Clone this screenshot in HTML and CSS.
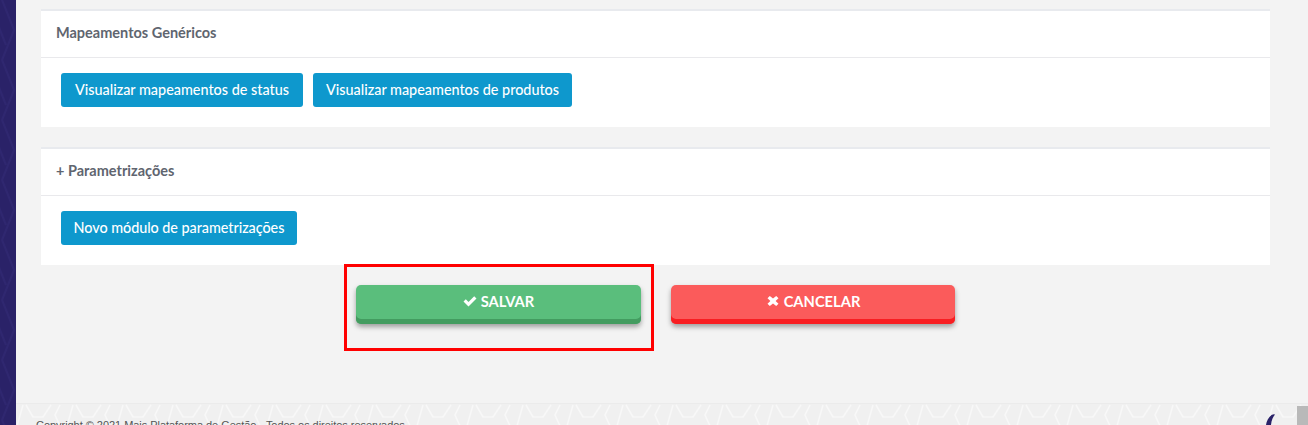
FILE: index.html
```html
<!DOCTYPE html>
<html lang="pt-BR">
<head>
<meta charset="utf-8">
<title>Parametrizações</title>
<link rel="stylesheet" href="styles.css">
</head>
<body>
<div class="shell">
  <aside class="sidebar"></aside>
  <div class="main">
    <div class="content">
      <section class="card">
        <header class="card-head">Mapeamentos Genéricos</header>
        <div class="card-body">
          <button class="btn btn-status">Visualizar mapeamentos de status</button>
          <button class="btn btn-products">Visualizar mapeamentos de produtos</button>
        </div>
      </section>
      <section class="card">
        <header class="card-head">+ Parametrizações</header>
        <div class="card-body">
          <button class="btn btn-new">Novo módulo de parametrizações</button>
        </div>
      </section>
      <div class="actions">
        <button class="action save">
          <svg class="ico" viewBox="0 0 14 14"><path d="M0.5 7.5 L2.8 5.2 L5.5 7.9 L11.2 2.2 L13.5 4.5 L5.5 12.5 Z" fill="#fff"/></svg>
          SALVAR
        </button>
        <button class="action cancel">
          <svg class="ico" viewBox="0 0 14 14"><path d="M1.5 4.2 L3.8 1.9 L7 4.6 L10.2 1.9 L12.5 4.2 L9.6 7 L12.5 9.8 L10.2 12.1 L7 9.4 L3.8 12.1 L1.5 9.8 L4.4 7 Z" fill="#fff"/></svg>
          CANCELAR
        </button>
      </div>
    </div>
    <footer class="footer">
      <span class="copy">Copyright © 2021 Mais Plataforma de Gestão - Todos os direitos reservados.</span>
      <svg class="logo" viewBox="0 0 11 11"><path d="M1 11 C1.5 7 3.5 3 7 0.7 Q9 -0.3 10 0.5 C8 3 6.5 6 6 11 Z" fill="#2a2268"/></svg>
    </footer>
  </div>
</div>
<div class="scroll-thumb"></div>
<div class="highlight"></div>
</body>
</html>
```
FILE: styles.css
```css
* { box-sizing: border-box; }
html, body { margin: 0; height: 425px; overflow: hidden; }
body { font-family: "Lato", "Noto Sans", sans-serif; background: #f3f3f3; }
.shell { display: flex; height: 425px; }
.sidebar {
  width: 16px; flex: none; background-color: #2a2268;
  background-image: url("data:image/svg+xml,%3Csvg xmlns='http://www.w3.org/2000/svg' width='50' height='60'%3E%3Cpath d='M2 0 L14 30 L2 60 M-4 20 L6 45' fill='none' stroke='%232f2770' stroke-width='2'/%3E%3C/svg%3E");
}
.main { flex: 1; display: flex; flex-direction: column; min-width: 0; }
.content { height: 387px; padding: 9px 38px 0 25px; flex: none; margin-bottom: 16px; }
.card { background: #fff; border-top: 2px solid #e8eaee; height: 118px; margin-bottom: 20px; }
.card-head {
  height: 47px; padding: 0 15px 3px; display: flex; align-items: center;
  font-size: 14.5px; font-weight: 700; color: #60656f; border-bottom: 1px solid #e9e9ec;
}
.card-body { padding: 15px 20px; display: flex; gap: 10px; }
.btn {
  height: 34px; padding: 0 0 2px; border: 0; border-radius: 3px; background: #0e98cd; color: #fff;
  font: 500 14.4px "Lato", "Noto Sans", sans-serif; white-space: nowrap;
}
.btn-status { width: 242px; }
.btn-products { width: 259px; }
.btn-new { width: 236px; letter-spacing: -0.05px; }
.actions { display: flex; gap: 30px; padding-left: 315px; }
.action {
  width: 285px; height: 39px; padding: 0 0 7px; border: 0; border-radius: 5px; color: #fff;
  font: 700 14.7px "Lato", "Noto Sans", sans-serif;
  display: flex; align-items: center; justify-content: center; gap: 4px;
}
.action + .action { width: 284px; }
.save { background: #5abe7c; box-shadow: inset 0 -5px 0 #439c60, 0 3px 5px rgba(0,0,0,.35); }
.cancel { background: #fb5b5b; box-shadow: inset 0 -5px 0 #f81e22, 0 3px 5px rgba(0,0,0,.35); }
.ico { width: 14px; height: 14px; }
.footer {
  height: 22px; flex: none; position: relative; overflow: hidden; border-top: 1px solid #ebebeb; background-color: #f0f0f0;
  background-image: url("data:image/svg+xml,%3Csvg xmlns='http://www.w3.org/2000/svg' width='50' height='22'%3E%3Cpath d='M1 22 L7 1 M10 1 L17 13 L27 13 L35 1 M44 1 L39 11 L44 22' fill='none' stroke='%23f8f8f8' stroke-width='1.5'/%3E%3C/svg%3E");
  padding: 14px 0 0 20px;
}
.copy { font: 11px/14px "Liberation Sans", sans-serif; letter-spacing: -0.04px; color: #555; white-space: nowrap; display: block; }
.logo { position: absolute; left: 1249px; top: 10px; width: 11px; height: 11px; }
.scroll-thumb { position: absolute; left: 1297px; top: 406px; width: 11px; height: 19px; background: #b9b9b9; }
.highlight { position: absolute; left: 344px; top: 264px; width: 310px; height: 87px; border: 3px solid #f00; }
```
